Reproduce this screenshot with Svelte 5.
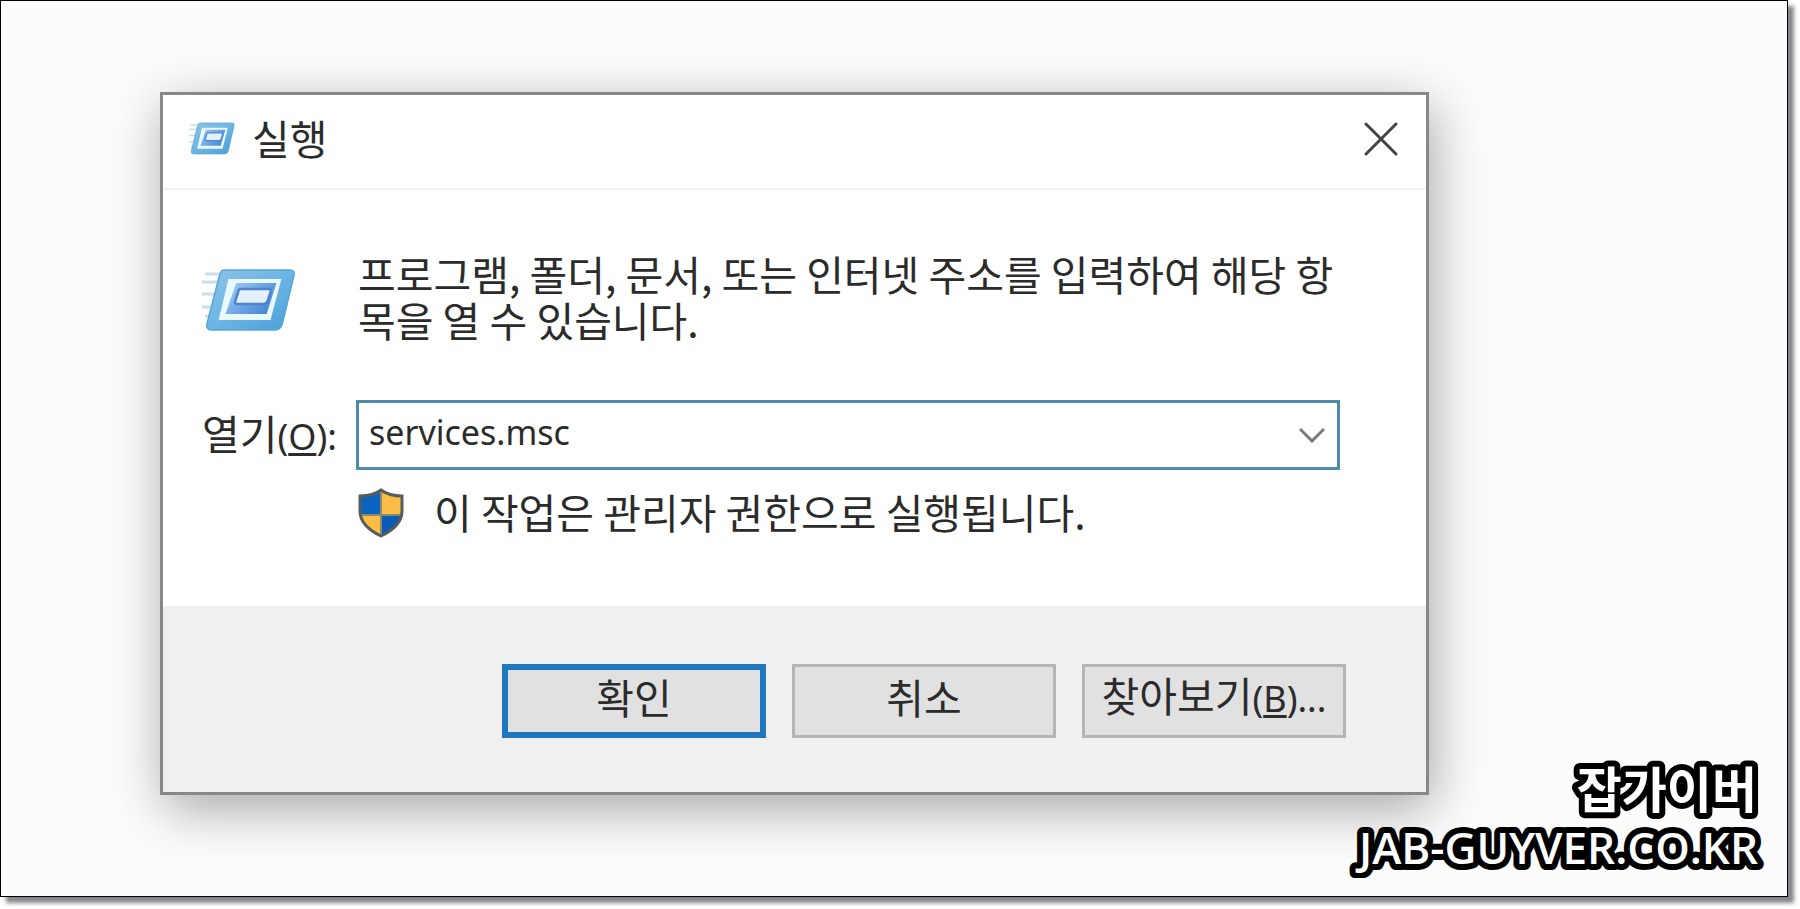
<script>
  let command = "services.msc";
</script>

{#snippet runIcon()}
  <svg class="run-icon" viewBox="0 0 100 66" preserveAspectRatio="none" aria-hidden="true">
    <defs>
      <linearGradient id="frame" x1="0" y1="0" x2="1" y2="1">
        <stop offset="0" stop-color="#8cc4e6" />
        <stop offset="0.5" stop-color="#6cb5e4" />
        <stop offset="1" stop-color="#4a9fd9" />
      </linearGradient>
      <linearGradient id="core" x1="0" y1="0" x2="1" y2="0.6">
        <stop offset="0" stop-color="#a4d0f5" />
        <stop offset="1" stop-color="#4788d6" />
      </linearGradient>
    </defs>
    <path d="M2 14h18M2 26h15M2 39h12M5 6h18M5 48h8" stroke="#b5d3e6" stroke-width="3" opacity="0.7" />
    <path d="M25 2h67q5 0 4 5L84 56q-2 6-7 6H12q-6 0-5-6L20 7q1-5 5-5z" fill="url(#frame)" stroke="#5aa5d2" stroke-width="1.5" />
    <path d="M29 11h54L72 52H19z" fill="#eaf9fb" />
    <path d="M37 15h41L68 46H26z" fill="url(#core)" />
    <path d="M41 21h29q3 0 2 3l-3 9q-1 3-4 3H38q-3 0-2-3l3-9q0-3 2-3z" fill="#e4f0fc" stroke="#4d83cf" stroke-width="2.5" />
  </svg>
{/snippet}

<main class="sheet">
  <section class="dialog" role="dialog" aria-labelledby="dialog-title">
    <header class="titlebar">
      <span class="small-icon">{@render runIcon()}</span>
      <h1 id="dialog-title">실행</h1>
      <button class="close" type="button" aria-label="닫기">
        <svg viewBox="0 0 34 34" aria-hidden="true">
          <path d="M2 2l30 30M32 2L2 32" stroke="#444" stroke-width="3" stroke-linecap="round" />
        </svg>
      </button>
    </header>

    <div class="body">
      <span class="large-icon">{@render runIcon()}</span>
      <p class="description">
        프로그램, 폴더, 문서, 또는 인터넷 주소를 입력하여 해당 항목을 열 수 있습니다.
      </p>

      <label for="command">열기<span class="key">(<u>O</u>):</span></label>
      <div class="combo">
        <input id="command" type="text" bind:value={command} />
        <button type="button" aria-label="목록 열기">
          <svg viewBox="0 0 26 16" aria-hidden="true">
            <path d="M1 2l12 12L25 2" fill="none" stroke="#777" stroke-width="3" />
          </svg>
        </button>
      </div>

      <p class="admin-note">
        <svg class="shield" viewBox="0 0 46 50" aria-hidden="true">
          <clipPath id="shield-shape">
            <path d="M23 2q8 6 21 6v15q0 15-21 25Q2 38 2 23V8q13 0 21-6z" />
          </clipPath>
          <g clip-path="url(#shield-shape)">
            <path d="M0 0h23v27H0z" fill="#0b65c0" />
            <path d="M23 0h23v27H23z" fill="#fbbd45" />
            <path d="M0 27h23v23H0z" fill="#fbbd45" />
            <path d="M23 27h23v23H23z" fill="#0b5cb8" />
            <path d="M23 0v50M0 27h46" stroke="#8c8a68" stroke-width="2" />
          </g>
          <path d="M23 2q8 6 21 6v15q0 15-21 25Q2 38 2 23V8q13 0 21-6z" fill="none" stroke="#565d5c" stroke-width="3" />
        </svg>
        <span>이 작업은 관리자 권한으로 실행됩니다.</span>
      </p>
    </div>

    <footer class="actions">
      <button class="default" type="button">확인</button>
      <button type="button">취소</button>
      <button type="button">찾아보기<span class="key">(<u>B</u>)...</span></button>
    </footer>
  </section>

  <svg class="watermark" viewBox="0 0 440 150">
    <text x="428" y="80">잡가이버</text>
    <text class="site" x="429" y="136">JAB-GUYVER.CO.KR</text>
  </svg>
</main>

<style>
  :global(body) {
    margin: 0;
    background: #fff;
  }

  .sheet {
    position: relative;
    box-sizing: border-box;
    min-height: calc(100vh - 12px);
    margin: 0 12px 12px 0;
    padding: 91px 20% 98px 159px;
    border: 1px solid #000;
    background: #fcfcfc;
    box-shadow: 6px 6px 4px #88868c;
    color: #2b2b2b;
    font-family: "Noto Sans CJK KR", sans-serif;
    font-size: 41px;
    line-height: 46px;
  }

  .dialog {
    margin-right: -2px;
    border: 3px solid #888;
    background: #fff;
    box-shadow: 4px 14px 50px rgba(0, 0, 0, 0.34);
  }

  .titlebar {
    display: flex;
    align-items: center;
    gap: 16px;
    height: 95px;
    padding: 0 28px 6px 25px;
    box-sizing: border-box;
    border-bottom: 2px solid #f3f3f3;
  }

  h1,
  p {
    margin: 0;
    font-size: inherit;
    font-weight: 400;
  }

  h1 {
    padding-bottom: 4px;
  }

  button,
  input {
    border: 0;
    padding: 0;
    color: inherit;
    font: inherit;
  }

  svg {
    display: block;
  }

  .run-icon {
    width: 100%;
    height: 100%;
  }

  .small-icon {
    width: 48px;
    height: 34px;
  }

  .large-icon {
    width: 98px;
    height: 66px;
    margin-top: 18px;
  }

  .close {
    margin-left: auto;
    background: transparent;
  }

  .close svg {
    width: 34px;
  }

  .body {
    display: grid;
    grid-template-columns: 156px 1fr;
    align-items: start;
    padding: 60px 86px 68px 37px;
  }

  .description {
    min-height: 92px;
    margin-bottom: 58px;
    padding-left: 2px;
  }

  label {
    padding-left: 2px;
    line-height: 64px;
    white-space: nowrap;
  }

  .key {
    font-family: "Noto Sans", sans-serif;
    font-size: 36px;
  }

  u {
    text-decoration-thickness: 3px;
    text-underline-offset: 3px;
  }

  .combo {
    display: flex;
    align-items: center;
    height: 70px;
    padding-right: 12px;
    box-sizing: border-box;
    border: 3px solid #4f8cab;
  }

  .combo input {
    flex: 1;
    min-width: 0;
    height: 60px;
    padding: 0 0 6px 10px;
    box-sizing: border-box;
    outline: none;
    background: transparent;
    font-family: "Noto Sans", sans-serif;
    font-size: 34px;
  }

  .combo button {
    background: transparent;
  }

  .combo button svg {
    width: 26px;
  }

  .admin-note {
    grid-column: 2;
    display: flex;
    align-items: center;
    gap: 30px;
    margin-top: 18px;
    padding-left: 2px;
  }

  .admin-note span {
    padding-bottom: 4px;
  }

  .shield {
    width: 46px;
  }

  .actions {
    display: flex;
    justify-content: flex-end;
    gap: 26px;
    padding: 58px 80px 54px;
    background: #f0f0f0;
  }

  .actions button {
    width: 264px;
    height: 74px;
    padding-bottom: 10px;
    border: 3px solid #b5b5b5;
    background: #e1e1e1;
    white-space: nowrap;
  }

  .actions .default {
    border: 6px solid #1f78bd;
  }

  .watermark {
    position: absolute;
    right: 18px;
    bottom: 18px;
    width: 440px;
    fill: #fff;
    stroke: #000;
    stroke-width: 12px;
    stroke-linejoin: round;
    paint-order: stroke;
    text-anchor: end;
    font-size: 49px;
    font-weight: 700;
  }

  .site {
    font-family: "Open Sans", sans-serif;
    font-size: 44px;
    font-weight: 600;
  }
</style>
